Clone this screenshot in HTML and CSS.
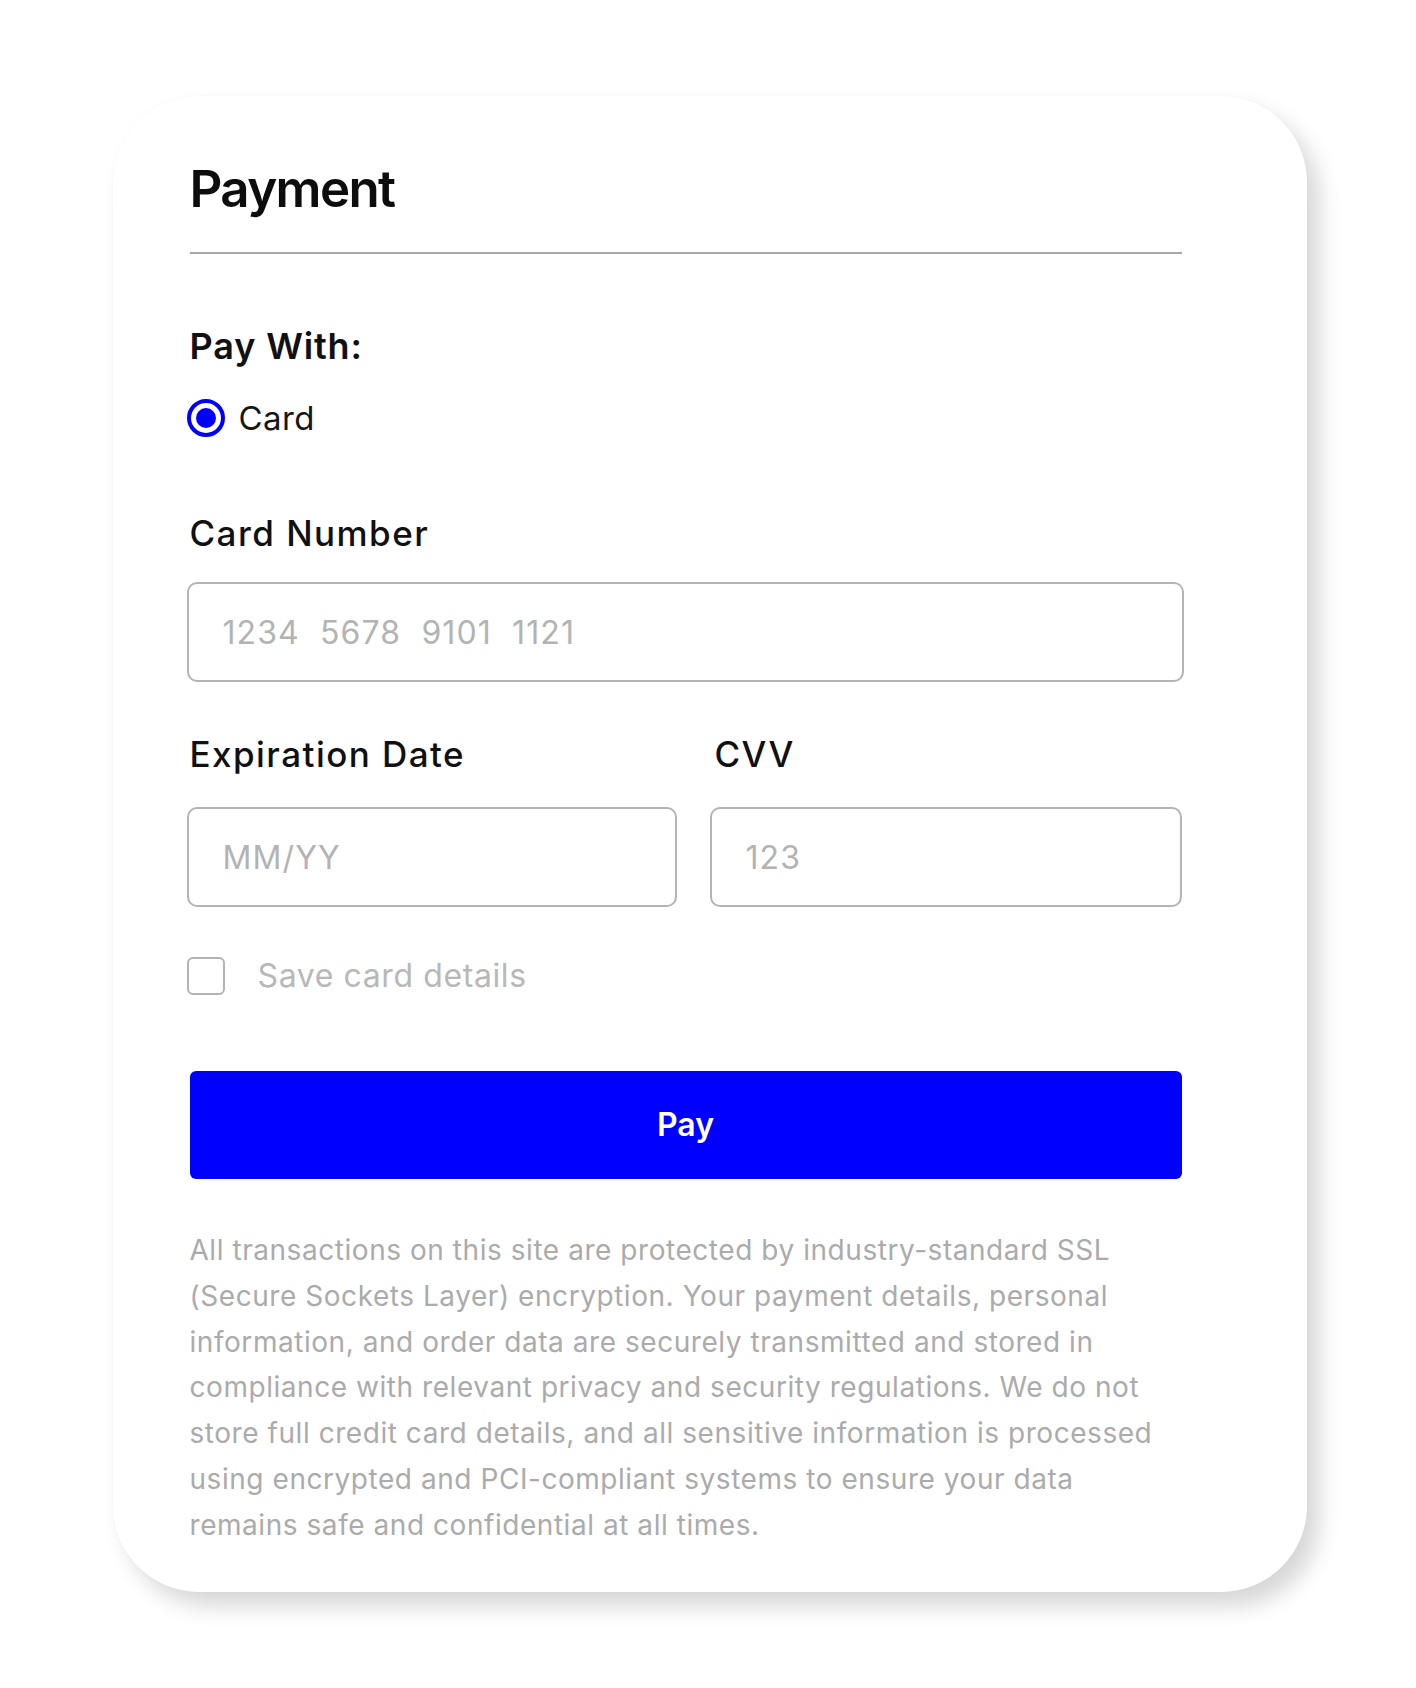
FILE: index.html
```html
<!DOCTYPE html>
<html lang="en">
<head>
<meta charset="utf-8">
<title>Payment</title>
<link rel="stylesheet" href="styles.css">
</head>
<body>
<main class="card">
  <header class="card-header">
    <h1 class="title">Payment</h1>
  </header>

  <section class="pay-with">
    <h2 class="pay-with-title">Pay With:</h2>
    <label class="radio-row">
      <span class="radio"><span class="radio-dot"></span></span>
      <span class="radio-text">Card</span>
    </label>
  </section>

  <section class="field field-number">
    <label class="field-label" for="cardnum">Card Number</label>
    <input class="text-input" id="cardnum" type="text" placeholder="1234  5678  9101  1121">
  </section>

  <section class="field-row">
    <div class="field">
      <label class="field-label" for="exp">Expiration Date</label>
      <input class="text-input" id="exp" type="text" placeholder="MM/YY">
    </div>
    <div class="field">
      <label class="field-label field-label-cvv" for="cvv">CVV</label>
      <input class="text-input" id="cvv" type="text" placeholder="123">
    </div>
  </section>

  <label class="check-row">
    <span class="checkbox"></span>
    <span class="check-text">Save card details</span>
  </label>

  <button class="pay-button" type="button">Pay</button>

  <p class="disclaimer">All transactions on this site are protected by industry-standard SSL (Secure Sockets Layer) encryption. Your payment details, personal information, and order data are securely transmitted and stored in compliance with relevant privacy and security regulations. We do not store full credit card details, and all sensitive information is processed using encrypted and PCI-compliant systems to ensure your data remains safe and confidential at all times.</p>
</main>
</body>
</html>
```
FILE: styles.css
```css
* {
  box-sizing: border-box;
}

html, body {
  margin: 0;
  padding: 0;
  background: #ffffff;
}

body {
  font-family: Inter, "Noto Sans", "Liberation Sans", sans-serif;
  color: #111111;
  padding: 96px 0 96px 3px;
}

.card {
  width: 1194px;
  margin: 0 auto;
  background: #ffffff;
  border-radius: 86px;
  padding: 62px 123px 43px 74px;
  box-shadow: 12px 14px 22px rgba(0, 0, 0, 0.16), 0 0 3px rgba(0, 0, 0, 0.025);
}

.card-header {
  margin: 0 2px 0 3px;
  padding-bottom: 32px;
  border-bottom: 2px solid #a9a9a9;
}

.title {
  margin: 0;
  font-size: 51px;
  line-height: 62px;
  font-weight: 600;
  color: #0d0d0d;
  letter-spacing: -1.6px;
}

.pay-with {
  margin-top: 70px;
  padding-left: 3px;
}

.pay-with-title {
  margin: 0;
  font-size: 36px;
  line-height: 44px;
  font-weight: 600;
  color: #111111;
  letter-spacing: 0.85px;
}

.radio-row {
  margin-top: 31px;
  margin-left: -3px;
  display: flex;
  align-items: center;
  gap: 14px;
  height: 38px;
}

.radio {
  width: 38px;
  height: 38px;
  border: 4px solid #0000ff;
  border-radius: 50%;
  display: flex;
  align-items: center;
  justify-content: center;
  flex: none;
}

.radio-dot {
  width: 20px;
  height: 20px;
  border-radius: 50%;
  background: #0000ff;
}

.radio-text {
  font-size: 33px;
  line-height: 38px;
  font-weight: 400;
  color: #161616;
  letter-spacing: 0.4px;
}

.field {
  display: flex;
  flex-direction: column;
}

.field-number {
  margin-top: 74px;
}

.field-label {
  padding-left: 3px;
  font-size: 35px;
  line-height: 44px;
  font-weight: 500;
  color: #111111;
  letter-spacing: 1.45px;
}

.field-number .field-label {
  margin-bottom: 27px;
}

.field-row {
  margin-top: 50px;
  display: grid;
  grid-template-columns: 490px 472px;
  column-gap: 33px;
}

.field-row .field-label {
  margin-bottom: 31px;
}

.field-label-cvv {
  padding-left: 5px;
}

.text-input {
  display: block;
  width: 100%;
  height: 100px;
  margin: 0;
  padding: 0 0 0 34px;
  border: 2px solid #b4b4b4;
  border-radius: 10px;
  background: #ffffff;
  font-family: Inter, "Noto Sans", "Liberation Sans", sans-serif;
  font-size: 32px;
  line-height: 40px;
  letter-spacing: 1.1px;
  color: #222222;
  outline: none;
}

.text-input::placeholder {
  color: #b3b3b3;
}

.check-row {
  margin-top: 50px;
  display: flex;
  align-items: center;
  gap: 33px;
  height: 38px;
}

.checkbox {
  width: 38px;
  height: 38px;
  border: 2px solid #b3b3b3;
  border-radius: 6px;
  flex: none;
}

.check-text {
  font-size: 32px;
  line-height: 38px;
  color: #b8b8b8;
  letter-spacing: 0.6px;
}

.pay-button {
  display: block;
  margin: 76px 2px 0 3px;
  width: calc(100% - 5px);
  height: 108px;
  border: none;
  border-radius: 6px;
  background: #0000ff;
  color: #ffffff;
  font-family: Inter, "Noto Sans", "Liberation Sans", sans-serif;
  font-size: 32px;
  line-height: 40px;
  font-weight: 600;
  padding: 0;
}

.disclaimer {
  margin: 49px 0 0 3px;
  max-width: 982px;
  font-size: 28px;
  line-height: 45.8px;
  color: #ababab;
  font-weight: 400;
  letter-spacing: 0.55px;
}
```
